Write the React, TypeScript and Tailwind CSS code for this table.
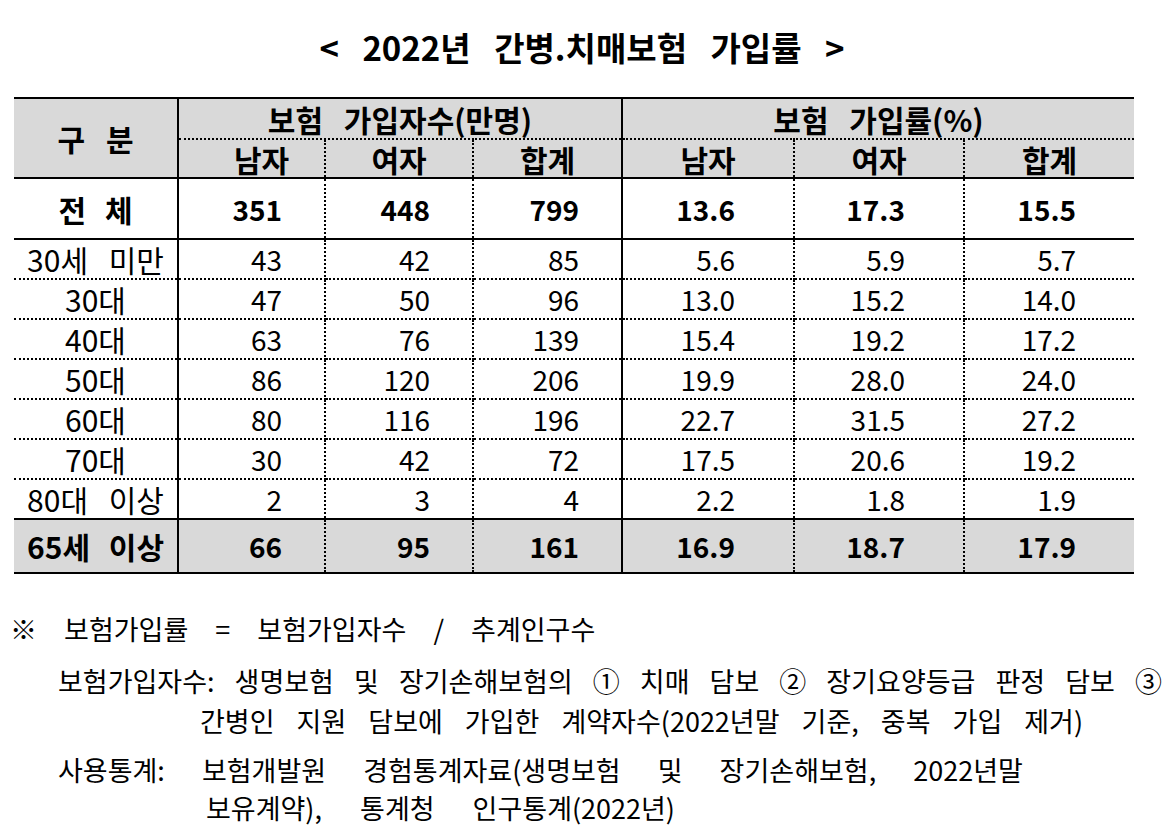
const FONT = "font-['Noto_Sans_CJK_KR','Noto_Sans',sans-serif]";

const rows = [
  ['30세 미만', '43', '42', '85', '5.6', '5.9', '5.7'],
  ['30대', '47', '50', '96', '13.0', '15.2', '14.0'],
  ['40대', '63', '76', '139', '15.4', '19.2', '17.2'],
  ['50대', '86', '120', '206', '19.9', '28.0', '24.0'],
  ['60대', '80', '116', '196', '22.7', '31.5', '27.2'],
  ['70대', '30', '42', '72', '17.5', '20.6', '19.2'],
  ['80대 이상', '2', '3', '4', '2.2', '1.8', '1.9'],
];

// right border for each column: solid after label and after the first group
const rightBorder = (c: number) =>
  c === 0 || c === 3
    ? '[border-right:2px_solid_#000]'
    : c === 6
      ? ''
      : '[border-right:2px_dotted_#000]';

// numbers sit right-aligned, the second group has a wider gutter
const numPad = (c: number) => (c <= 3 ? 'text-right pr-[42px]' : 'text-right pr-[58px]');

export default function App() {
  return (
    <div className={`w-[1172px] h-[832px] bg-white text-black ${FONT}`}>
      {/* Title */}
      <div className="h-[95px] flex items-center justify-center">
        <h1 className="text-[33px] font-bold leading-none [word-spacing:16px] pr-[8px]">
          &lt; 2022년 간병.치매보험 가입률 &gt;
        </h1>
      </div>

      {/* Table */}
      <table className="mt-[2px] ml-[14px] w-[1120px] border-collapse table-fixed text-[28px] leading-none">
        <colgroup>
          <col className="w-[164px]" />
          <col className="w-[147px]" />
          <col className="w-[148px]" />
          <col className="w-[149px]" />
          <col className="w-[172px]" />
          <col className="w-[170px]" />
          <col className="w-[170px]" />
        </colgroup>
        <thead className="text-[30px]">
          <tr className="h-[41px] bg-[#d9d9d9]">
            <th
              rowSpan={2}
              className="font-bold [word-spacing:14px] [border-top:2px_solid_#000] [border-right:2px_solid_#000] [border-bottom:2px_solid_#000]"
            >
              구 분
            </th>
            <th
              colSpan={3}
              className="font-bold [word-spacing:14px] [border-top:2px_solid_#000] [border-right:2px_solid_#000] [border-bottom:2px_dotted_#000]"
            >
              보험 가입자수(만명)
            </th>
            <th
              colSpan={3}
              className="font-bold [word-spacing:14px] [border-top:2px_solid_#000] [border-bottom:2px_dotted_#000]"
            >
              보험 가입률(%)
            </th>
          </tr>
          <tr className="h-[39px] bg-[#d9d9d9]">
            {['남자', '여자', '합계', '남자', '여자', '합계'].map((h, i) => (
              <th
                key={i}
                className={`font-bold [border-bottom:2px_solid_#000] ${rightBorder(i + 1)} ${i === 0 ? 'pl-[20px]' : ''}`}
              >
                {h}
              </th>
            ))}
          </tr>
        </thead>
        <tbody>
          <tr className="h-[61px] font-bold">
            <td className={`text-center text-[30px] [word-spacing:12px] [border-bottom:2px_solid_#000] ${rightBorder(0)}`}>
              전 체
            </td>
            {['351', '448', '799', '13.6', '17.3', '15.5'].map((v, i) => (
              <td
                key={i}
                className={`${numPad(i + 1)} [border-bottom:2px_solid_#000] ${rightBorder(i + 1)}`}
              >
                {v}
              </td>
            ))}
          </tr>
          {rows.map((r, ri) => (
            <tr key={ri} className="h-[40px]">
              {r.map((v, c) => (
                <td
                  key={c}
                  className={`${c === 0 ? 'text-center text-[30px] [word-spacing:14px]' : numPad(c)} ${rightBorder(c)} ${
                    ri === rows.length - 1 ? '[border-bottom:2px_solid_#000]' : '[border-bottom:2px_dotted_#000]'
                  }`}
                >
                  {v}
                </td>
              ))}
            </tr>
          ))}
          <tr className="h-[54px] bg-[#d9d9d9] font-bold">
            <td className={`text-center text-[30px] [word-spacing:12px] [border-bottom:2px_solid_#000] ${rightBorder(0)}`}>
              65세 이상
            </td>
            {['66', '95', '161', '16.9', '18.7', '17.9'].map((v, i) => (
              <td
                key={i}
                className={`${numPad(i + 1)} [border-bottom:2px_solid_#000] ${rightBorder(i + 1)}`}
              >
                {v}
              </td>
            ))}
          </tr>
        </tbody>
      </table>

      {/* Notes */}
      <div className="flex flex-col text-[27px] leading-[30px] whitespace-nowrap">
        <p className="mt-[40px] pl-[10px] [word-spacing:21px]">※ 보험가입률 = 보험가입자수 / 추계인구수</p>
        <p className="mt-[22px] pl-[58px] [word-spacing:14px]">
          보험가입자수: 생명보험 및 장기손해보험의 ① 치매 담보 ② 장기요양등급 판정 담보 ③
        </p>
        <p className="mt-[10px] pl-[200px] [word-spacing:16px]">
          간병인 지원 담보에 가입한 계약자수(2022년말 기준, 중복 가입 제거)
        </p>
        <p className="mt-[19px] pl-[58px] [word-spacing:31px]">
          사용통계: 보험개발원 경험통계자료(생명보험 및 장기손해보험, 2022년말
        </p>
        <p className="mt-[8px] pl-[206px] [word-spacing:32px]">보유계약), 통계청 인구통계(2022년)</p>
      </div>
    </div>
  );
}
